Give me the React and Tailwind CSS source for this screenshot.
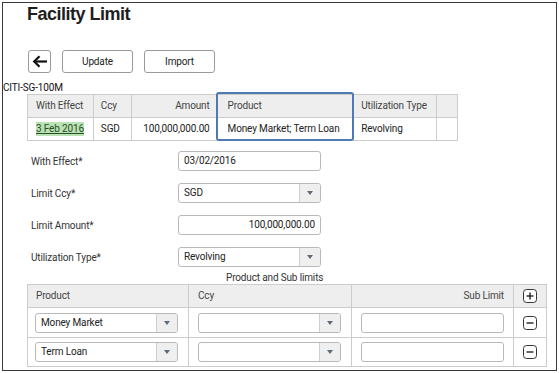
import React from "react";

const Tri = () => (
  <div className="w-0 h-0 border-l-[3px] border-r-[3px] border-t-[4px] border-l-transparent border-r-transparent border-t-[#5f6b78]" />
);

function Select({ value }) {
  return (
    <div className="flex h-[20px] w-[143px] border border-[#b9b9b9] rounded-[3px] bg-white overflow-hidden">
      <div className="flex-1 px-[5px] leading-[18px] text-[#222] whitespace-nowrap">{value}</div>
      <div className="w-[21px] border-l border-[#cfcfcf] bg-[#efefef] flex items-center justify-center">
        <Tri />
      </div>
    </div>
  );
}

function Input({ value, right }) {
  return (
    <div
      className={
        "h-[20px] w-[143px] border border-[#b9b9b9] rounded-[3px] bg-white px-[5px] leading-[18px] text-[#222] whitespace-nowrap " +
        (right ? "text-right" : "")
      }
    >
      {value}
    </div>
  );
}

function SqIcon({ plus }) {
  return (
    <svg width="14" height="14" viewBox="0 0 14 14">
      <rect x="0.5" y="0.5" width="13" height="13" rx="3" fill="white" stroke="#333" strokeWidth="1" />
      <line x1="3.5" y1="7" x2="10.5" y2="7" stroke="#222" strokeWidth="1.4" />
      {plus && <line x1="7" y1="3.5" x2="7" y2="10.5" stroke="#222" strokeWidth="1.4" />}
    </svg>
  );
}

const cell = "border-r border-b border-[#cccccc] whitespace-nowrap";

export default function App() {
  const font = { fontFamily: "Roboto, 'Noto Sans', sans-serif" };
  return (
    <div className="w-[559px] h-[373px] bg-white p-[2px]" style={font}>
      <div className="h-[369px] w-[555px] border border-[#3a3a3a] text-[10px] tracking-[-0.15px] text-[#333] flex flex-col">
        <h1
          className="ml-[24px] text-[18px] font-bold leading-[22px] tracking-[-0.5px] text-[#1e1e1e]"
          style={{ fontFamily: "'Liberation Sans', Arial, sans-serif" }}
        >
          Facility Limit
        </h1>

        <div className="ml-[25px] mt-[25px] flex gap-[11px] h-[23px]">
          <div className="w-[23px] h-[23px] border border-[#9a9a9a] rounded-[3px] flex items-center justify-center bg-white">
            <svg width="16" height="13" viewBox="0 0 16 13">
              <path d="M15 6.5 H2.5" stroke="#111" strokeWidth="2.2" fill="none" />
              <path d="M7.5 1.2 L2.2 6.5 L7.5 11.8" stroke="#111" strokeWidth="2.2" fill="none" />
            </svg>
          </div>
          <div className="w-[71px] h-[23px] border border-[#9a9a9a] rounded-[3px] flex items-center justify-center text-[#222]">
            Update
          </div>
          <div className="w-[71px] h-[23px] border border-[#9a9a9a] rounded-[3px] flex items-center justify-center text-[#222]">
            Import
          </div>
        </div>

        <div className="mt-[8px] leading-[13px] text-[#111]">CITI-SG-100M</div>

        <div className="relative ml-[24px] w-[431px]">
          <div className="border-t border-l border-[#cccccc]">
            <div className="flex h-[23px] bg-[#eeeeee] text-[#444]">
              <div className={"w-[66px] px-[8px] leading-[22px] " + cell}>With Effect</div>
              <div className={"w-[38px] px-[7px] leading-[22px] " + cell}>Ccy</div>
              <div className={"w-[86px] px-[7px] leading-[22px] text-right " + cell}>Amount</div>
              <div className={"w-[137px] px-[10px] leading-[22px] " + cell}>Product</div>
              <div className={"w-[83px] px-[7px] leading-[22px] " + cell}>Utilization Type</div>
              <div className={"w-[21px] " + cell}></div>
            </div>
            <div className="flex h-[23px] bg-white text-[#222]">
              <div className={"w-[66px] px-[8px] flex items-center " + cell}>
                <span className="bg-[#b9e3b2] underline leading-[14px] text-[#2a4d2a]">3 Feb 2016</span>
              </div>
              <div className={"w-[38px] px-[7px] leading-[22px] " + cell}>SGD</div>
              <div className={"w-[86px] px-[7px] leading-[22px] text-right " + cell}>100,000,000.00</div>
              <div className={"w-[137px] px-[10px] leading-[22px] " + cell}>Money Market; Term Loan</div>
              <div className={"w-[83px] px-[7px] leading-[22px] " + cell}>Revolving</div>
              <div className={"w-[21px] " + cell}></div>
            </div>
          </div>
          <div className="absolute left-[189px] top-[-2px] w-[138px] h-[49px] border-2 border-[#4d7ab3] rounded-[3px]" />
        </div>

        <div className="mt-[10px] flex flex-col gap-[12px]">
          {[
            ["With Effect*", <Input value="03/02/2016" />],
            ["Limit Ccy*", <Select value="SGD" />],
            ["Limit Amount*", <Input value="100,000,000.00" right />],
            ["Utilization Type*", <Select value="Revolving" />],
          ].map(([label, ctl], i) => (
            <div key={i} className="flex h-[20px] items-center">
              <div className="ml-[28px] w-[147px] text-[#333] whitespace-nowrap">{label}</div>
              {ctl}
            </div>
          ))}
        </div>

        <div className="mt-[5px] ml-[223px] leading-[12px] text-[#333] whitespace-nowrap">Product and Sub limits</div>

        <div className="ml-[24px] w-[520px] border-t border-l border-[#cccccc]">
          <div className="flex h-[23px] bg-[#eeeeee] text-[#444]">
            <div className={"w-[161px] px-[8px] leading-[22px] " + cell}>Product</div>
            <div className={"w-[163px] px-[9px] leading-[22px] " + cell}>Ccy</div>
            <div className={"w-[162px] px-[9px] leading-[22px] text-right " + cell}>Sub Limit</div>
            <div className={"flex-1 flex items-center justify-center " + cell}>
              <SqIcon plus />
            </div>
          </div>
          {["Money Market", "Term Loan"].map((p, i) => (
            <div key={p} className={"flex bg-white " + (i === 0 ? "h-[30px]" : "h-[29px]")}>
              <div className={"w-[161px] px-[7px] flex items-center " + cell}>
                <Select value={p} />
              </div>
              <div className={"w-[163px] px-[9px] flex items-center " + cell}>
                <Select value="" />
              </div>
              <div className={"w-[162px] px-[9px] flex items-center " + cell}>
                <Input value="" />
              </div>
              <div className={"flex-1 flex items-center justify-center " + cell}>
                <SqIcon />
              </div>
            </div>
          ))}
        </div>
      </div>
    </div>
  );
}
